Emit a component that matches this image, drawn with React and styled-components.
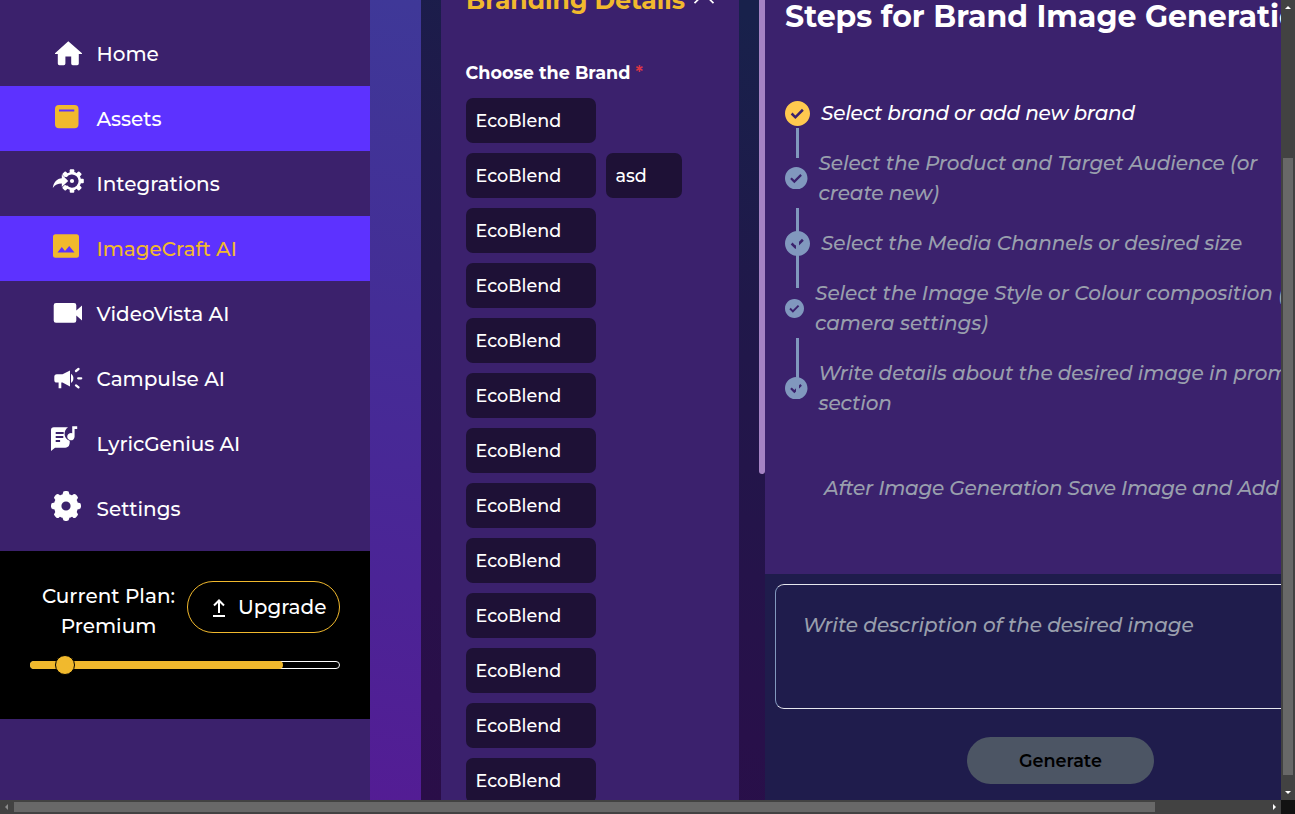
import React from 'react';
import styled, { createGlobalStyle } from 'styled-components';

const GlobalStyle = createGlobalStyle`
  *, *::before, *::after { box-sizing: border-box; }
  html, body { margin: 0; height: 100%; overflow: hidden; }
  body { font-family: Montserrat, Inter, "Liberation Sans", sans-serif; font-weight: 500; color: #fff; }
`;

const Screen = styled.div`
  width: 1295px;
  height: 814px;
  display: grid;
  grid-template-columns: 1281px 14px;
  grid-template-rows: 800px 14px;
  overflow: hidden;
`;

const Page = styled.div`
  display: flex;
  overflow: hidden;
  background: linear-gradient(189deg, #38409c 0%, #3f3898 14%, #442d96 45%, #4b2496 72%, #541c94 96%);
`;

const Label = styled.span`
  white-space: nowrap;
  letter-spacing: ${(p) => p.$track || 0}px;
`;

/* Sidebar */
const Sidebar = styled.aside`
  width: 370px;
  flex: none;
  background: #3b216c;
  padding-top: 21px;
`;

const NavItem = styled.a`
  height: 65px;
  display: flex;
  align-items: center;
  padding-left: 48px;
  gap: 12.5px;
  font-size: 20px;
  background: ${(p) => (p.$filled ? '#5d32ff' : 'transparent')};
  color: ${(p) => (p.$accent ? '#f1b92d' : '#fff')};

  svg { width: 36px; height: 36px; flex: none; margin-bottom: 5px; }
  span { padding-top: 1px; }
`;

const Plan = styled.section`
  height: 168px;
  margin-top: 10px;
  background: #000;
  padding: 30px 30px 0;
  font-size: 20px;
`;

const PlanRow = styled.div`
  display: flex;
  justify-content: space-between;
`;

const PlanName = styled.div`
  width: 157px;
  text-align: center;
  line-height: 30px;
  display: flex;
  flex-direction: column;
  align-items: center;
`;

const UpgradeButton = styled.button`
  width: 153px;
  height: 52px;
  padding: 0 0 0 24px;
  display: flex;
  align-items: center;
  gap: 12px;
  border: 1px solid #f1b92d;
  border-radius: 26px;
  background: transparent;
  color: #fff;
  font: inherit;
  svg { width: 14px; height: 18px; flex: none; margin-top: 1px; }
`;

const Meter = styled.div`
  position: relative;
  height: 8px;
  margin-top: 20px;
  border: 1px solid #fff;
  border-radius: 4px;
`;

const MeterFill = styled.div`
  height: 8px;
  width: 253px;
  margin: -1px;
  border-radius: 4px;
  background: #f1b92d;
`;

const MeterKnob = styled.div`
  position: absolute;
  left: 24px;
  top: -7px;
  width: 20px;
  height: 20px;
  border: 1px solid #000;
  border-radius: 50%;
  background: #f1b92d;
`;

/* Work area */
const Workspace = styled.main`
  flex: 1;
  min-width: 0;
  margin-left: 51px;
  display: flex;
  background: linear-gradient(205deg, #18214c 0%, #18214b 22%, #20184a 46%, #28104a 82%, #2a0e48 100%);
`;

const BrandPanel = styled.section`
  flex: none;
  width: 298px;
  height: 800px;
  margin-left: 20px;
  padding-left: 25px;
  background: #3b216d;
  overflow: hidden;
`;

const PanelTitle = styled.div`
  display: flex;
  align-items: center;
  height: 40px;
  margin-top: -20px;
  gap: 7px;
  color: #f1b92d;
  font-size: 25px;
  font-weight: 700;
  svg { width: 24px; height: 24px; flex: none; }
`;

const FieldLabel = styled.div`
  margin: 42px 0 0 -0.5px;
  height: 22px;
  line-height: 22px;
  font-size: 17.6px;
  font-weight: 700;
  display: flex;
  gap: 5px;
`;

const Required = styled.span`
  color: #dc3545;
  font-weight: 600;
`;

const TagList = styled.div`
  margin-top: 14px;
  display: flex;
  flex-direction: column;
  gap: 10px;
`;

const TagRow = styled.div`
  display: flex;
  gap: 10px;
`;

const Tag = styled.div`
  width: ${(p) => p.$width}px;
  height: 45px;
  padding-left: 9.5px;
  line-height: 46px;
  border-radius: 7px;
  background: #1e1136;
  font-size: 17.6px;
`;

const PaneScroll = styled.div`
  width: 6px;
  height: 474px;
  margin-left: 20px;
  flex: none;
  background: #a583c4;
  border-radius: 0 0 3px 3px;
`;

const RightPane = styled.div`
  flex: 1;
  min-width: 0;
  overflow: hidden;
  background: #1f1c4c;
`;

const StepsPanel = styled.section`
  height: 574px;
  padding-left: 20px;
  background: #3b226d;
  white-space: nowrap;
  overflow: hidden;
`;

const StepsTitle = styled.h2`
  margin: 0;
  height: 32px;
  line-height: 33px;
  font-size: 30px;
  font-weight: 700;
`;

const StepList = styled.ol`
  list-style: none;
  margin: 66px 0 0;
  padding: 0;
  display: flex;
  flex-direction: column;
  gap: 20px;
`;

const Step = styled.li`
  position: relative;
  display: flex;
  align-items: center;
  gap: 11px;
  color: ${(p) => (p.$active ? '#fff' : '#999fad')};
  font-size: 20px;
  font-style: italic;
  line-height: 30px;

  svg { position: relative; flex: none; width: ${(p) => p.$icon}px; height: ${(p) => p.$icon}px; color: ${(p) => (p.$active ? '#ffc94f' : '#8198be')}; }

  &::before {
    content: '';
    position: absolute;
    left: 11px;
    top: ${(p) => p.$lineTop}px;
    width: 3px;
    height: ${(p) => p.$line}px;
    background: #8198be;
  }
`;

const StepText = styled.div`
  display: flex;
  flex-direction: column;
`;

const FinalNote = styled.p`
  margin: 55px 0 0 39px;
  line-height: 30px;
  font-size: 20px;
  font-style: italic;
  color: #999fad;
`;

const Prompt = styled.div`
  width: 700px;
  height: 125px;
  margin: 10px 0 0 10px;
  padding: 25px 0 0 27px;
  border: 1px solid #e6e7ee;
  border-left-color: #8198be;
  border-radius: 9px;
  color: #999fad;
  font-size: 20px;
  font-style: italic;
  line-height: 30px;
`;

const GenerateButton = styled.button`
  display: block;
  width: 187px;
  height: 47px;
  margin: 28px 0 0 202px;
  padding: 0;
  border: 0;
  border-radius: 24px;
  background: #4c5564;
  color: #000;
  font: inherit;
  font-size: 17.6px;
  font-weight: 600;
`;

/* Window scrollbars */
const Track = styled.div`
  display: flex;
  flex-direction: ${(p) => (p.$vertical ? 'column' : 'row')};
  align-items: center;
  background: #424242;
`;

const Thumb = styled.div`
  background: #686868;
  width: ${(p) => p.$w}px;
  height: ${(p) => p.$h}px;
`;

const Arrow = styled.svg`
  width: 14px;
  height: 14px;
  flex: none;
`;

const Spacer = styled.div`
  flex: ${(p) => (p.$size ? `0 0 ${p.$size}px` : 1)};
`;

const Corner = styled.div`
  background: #121212;
`;

const icons = {
  home: <path d="M20.3 8.2 34 20.2v.8h-3.2v9.6a1.6 1.6 0 0 1-1.6 1.6h-4.4a1.6 1.6 0 0 1-1.6-1.6v-7.2h-5.8v7.2a1.6 1.6 0 0 1-1.6 1.6h-4.4a1.6 1.6 0 0 1-1.6-1.6V21H7v-.8z" />,
  assets: <path fillRule="evenodd" d="M11 7h15.500a4 4 0 0 1 4 4v15.300a4 4 0 0 1-4 4H11a4 4 0 0 1-4-4V11a4 4 0 0 1 4-4zm0 4.400v2.200h15.300v-2.200z" />,
  integrations: (
    <>
      <path d="M17.600 13.400A7.900 7.900 0 1 1 18 23.200" fill="none" stroke="currentColor" strokeWidth="2.600" />
      {[0, 45, 90, 135, 225, 270, 315].map((a) => (
        <rect key={a} x="31.400" y="15.700" width="4.400" height="4.600" rx="1" transform={`rotate(${a} 24 18)`} />
      ))}
      <circle cx="24" cy="18" r="2.100" />
      <path d="M4.800 25C5.600 19 9 15.600 13.800 15.200v-3.700l6.400 6.400-6.400 6.100v-3.400c-4 0-6.600 1.200-9 4.400z" />
    </>
  ),
  image: <path fillRule="evenodd" d="M7.500 6.200h21a2.500 2.500 0 0 1 2.500 2.500v18.600a2.500 2.500 0 0 1-2.500 2.500h-21A2.500 2.500 0 0 1 5 27.300V8.700a2.500 2.500 0 0 1 2.500-2.500zM9.500 24.600h17l-5.300-6.700-4.200 5-3.200-3.800z" />,
  video: <path d="M8 10h18a2.300 2.300 0 0 1 2.300 2.300v5.200L34 12.600v15l-5.700-5v4.800a2.300 2.300 0 0 1-2.300 2.300H8a2.300 2.300 0 0 1-2.300-2.300V12.300A2.300 2.300 0 0 1 8 10z" />,
  campulse: (
    <g transform="translate(0 2)">
      <path d="M9 14.200h5.500L22 10.400v16.100l-7.500-3.900h-1.200v5.600h-2.700v-5.600H9a2.600 2.600 0 0 1-2.700-2.600v-3.200A2.600 2.600 0 0 1 9 14.200z" />
      <path d="M23 13.800c3.200 2.100 3.200 7.100 0 9.200z" />
      <path d="M28 11l2.500-2M30.200 18.300h3M28 25.400l2.500 2" fill="none" stroke="currentColor" strokeWidth="2.300" strokeLinecap="round" />
    </g>
  ),
  lyric: (
    <>
      <path fillRule="evenodd" d="M5.800 4.200h14.200c-5 3.400-4.600 11.300 1.700 13.600.3 3.800-.8 6.900-4.500 6.900H7L3 28V7A2.800 2.800 0 0 1 5.800 4.200zM7.700 9v1.900h8V9zM7.700 13v1.900h7.600V13zM7.700 17v1.900h4.400V17z" />
      <path d="M29.200 3.200v2.700h-2.600v7.700a3.700 3.700 0 1 1-2.400-3.400V3.200z" />
    </>
  ),
  settings: (
    <>
      <circle cx="18" cy="18" r="8.400" fill="none" stroke="currentColor" strokeWidth="7.600" />
      {[0, 45, 90, 135, 180, 225, 270, 315].map((a) => (
        <rect key={a} x="27" y="14.800" width="6" height="6.400" rx="2.400" transform={`rotate(${a} 18 18)`} />
      ))}
    </>
  ),
};

const nav = [
  { icon: 'home', label: 'Home' },
  { icon: 'assets', label: 'Assets', filled: true },
  { icon: 'integrations', label: 'Integrations' },
  { icon: 'image', label: 'ImageCraft AI', filled: true, accent: true },
  { icon: 'video', label: 'VideoVista AI' },
  { icon: 'campulse', label: 'Campulse AI' },
  { icon: 'lyric', label: 'LyricGenius AI', track: -0.08 },
  { icon: 'settings', label: 'Settings' },
];

const steps = [
  { icon: 25, track: -0.2, active: true, lineTop: 30, line: 30, lines: ['Select brand or add new brand'] },
  { icon: 22.5, track: -0.08, lineTop: 60, line: 30, lines: ['Select the Product and Target Audience (or', 'create new)'] },
  { icon: 25, track: -0.07, lineTop: 10, line: 50, lines: ['Select the Media Channels or desired size'] },
  { icon: 19, track: -0.04, lineTop: 60, line: 30, lines: ['Select the Image Style or Colour composition (or', 'camera settings)'] },
  { icon: 22.5, track: -0.09, lineTop: 0, line: 40, lines: ['Write details about the desired image in prompt', 'section'] },
];

const brandRows = Array.from({ length: 13 }, (_, i) => (i === 1 ? ['EcoBlend', 'asd'] : ['EcoBlend']));

const CheckIcon = () => (
  <svg viewBox="2 2 20 20" fill="currentColor">
    <path d="M12 2C6.486 2 2 6.486 2 12s4.486 10 10 10 10-4.486 10-10S17.514 2 12 2zm-1.700 14.413-3.713-3.705L8 11.292l2.299 2.295 5.294-5.294 1.414 1.414-6.706 6.706z" />
  </svg>
);

export default function App() {
  return (
    <Screen>
      <GlobalStyle />
      <Page>
        <Sidebar>
          {nav.map((n) => (
            <NavItem key={n.label} $filled={n.filled} $accent={n.accent}>
              <svg viewBox="0 0 36 36" fill="currentColor" color={n.filled ? '#f1b92d' : '#fff'}>{icons[n.icon]}</svg>
              <Label $track={n.track}>{n.label}</Label>
            </NavItem>
          ))}
          <Plan>
            <PlanRow>
              <PlanName>
                <Label>Current Plan:</Label>
                <Label>Premium</Label>
              </PlanName>
              <UpgradeButton>
                <svg viewBox="0 0 14 18" fill="none" stroke="currentColor" strokeWidth="2">
                  <path d="M7 14V2M2 6.500 7 1.500 12 6.500M1 17h12" />
                </svg>
                <Label>Upgrade</Label>
              </UpgradeButton>
            </PlanRow>
            <Meter>
              <MeterFill />
              <MeterKnob />
            </Meter>
          </Plan>
        </Sidebar>
        <Workspace>
          <BrandPanel>
            <PanelTitle>
              <Label>Branding Details</Label>
              <svg viewBox="0 0 24 24" fill="none" stroke="#fff" strokeWidth="1.700">
                <path d="M2.500 15.200 12 5.700l9.500 9.500" />
              </svg>
            </PanelTitle>
            <FieldLabel>
              <Label>Choose the Brand</Label>
              <Required>*</Required>
            </FieldLabel>
            <TagList>
              {brandRows.map((row, i) => (
                <TagRow key={i}>
                  {row.map((name) => (
                    <Tag key={name} $width={name === 'asd' ? 76 : 130}>
                      <Label>{name}</Label>
                    </Tag>
                  ))}
                </TagRow>
              ))}
            </TagList>
          </BrandPanel>
          <PaneScroll />
          <RightPane>
            <StepsPanel>
              <StepsTitle>
                <Label>Steps for Brand Image Generation</Label>
              </StepsTitle>
              <StepList>
                {steps.map((s) => (
                  <Step key={s.lines[0]} $icon={s.icon} $active={s.active} $lineTop={s.lineTop} $line={s.line}>
                    <CheckIcon />
                    <StepText>
                      {s.lines.map((text) => (
                        <Label key={text} $track={s.track}>{text}</Label>
                      ))}
                    </StepText>
                  </Step>
                ))}
              </StepList>
              <FinalNote>
                <Label $track={-0.22}>After Image Generation Save Image and Add</Label>
              </FinalNote>
            </StepsPanel>
            <Prompt>
              <Label $track={-0.05}>Write description of the desired image</Label>
            </Prompt>
            <GenerateButton>
              <Label>Generate</Label>
            </GenerateButton>
          </RightPane>
        </Workspace>
      </Page>
      <Track $vertical>
        <Arrow viewBox="0 0 14 14" fill="#fff"><path d="M4 9h6L7 6z" /></Arrow>
        <Spacer $size={144} />
        <Thumb $w={10} $h={617} />
        <Spacer />
        <Arrow viewBox="0 0 14 14" fill="#fff"><path d="M4 5h6L7 8z" /></Arrow>
      </Track>
      <Track>
        <Arrow viewBox="0 0 14 14" fill="#8b8b8b"><path d="M8 4v6L5 7z" /></Arrow>
        <Thumb $w={1141} $h={10} />
        <Spacer />
        <Arrow viewBox="0 0 14 14" fill="#fff"><path d="M6 4v6l3-3z" /></Arrow>
      </Track>
      <Corner />
    </Screen>
  );
}
